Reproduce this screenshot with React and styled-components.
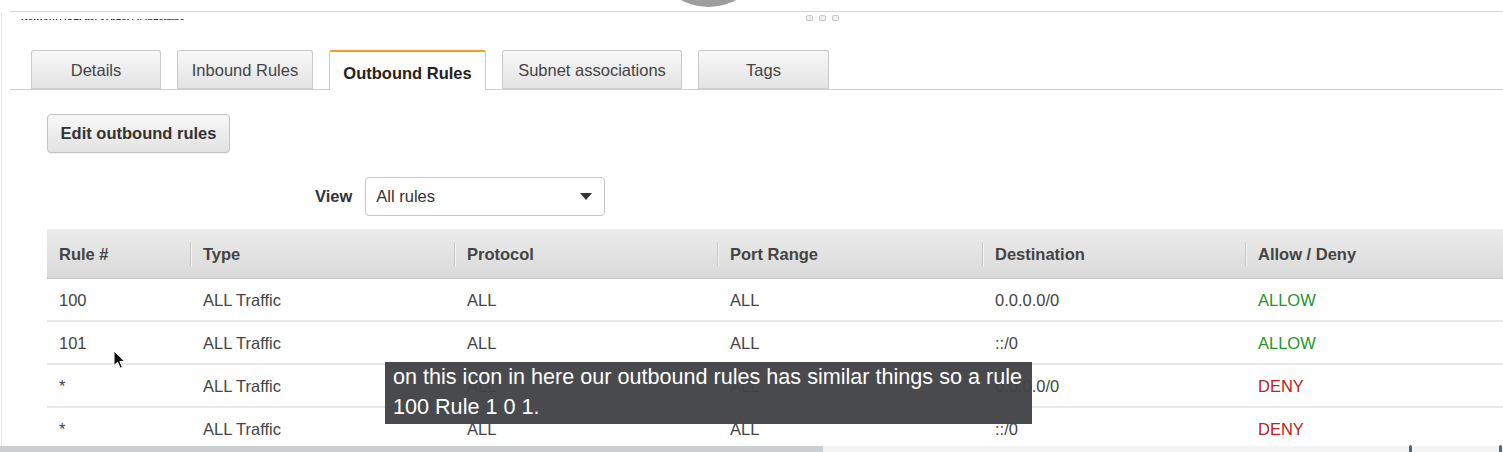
import React from "react";
import styled, { createGlobalStyle } from "styled-components";

const GlobalStyle = createGlobalStyle`
  html, body { margin: 0; padding: 0; background: #ffffff; }
  body { font-family: "Liberation Sans", Arial, sans-serif; overflow: hidden; }
`;

const Page = styled.div`
  position: relative;
  width: 1503px;
  height: 452px;
  overflow: hidden;
  background: #fff;
  color: #444;
`;

const Circle = styled.div`
  position: absolute;
  left: 651px;
  top: -108px;
  width: 115px;
  height: 115px;
  border-radius: 50%;
  background: #9d9d9d;
`;

const Frame = styled.div`
  padding-top: 11px;
`;

const TopRule = styled.div`
  margin-left: 10px;
  height: 1px;
  background: #d2d2d2;
`;

const Body = styled.div`
  margin-left: 1px;
  border-left: 1px solid #e6e6e6;
  height: 440px;
`;

const TitleRow = styled.div`
  display: flex;
  align-items: flex-start;
  height: 12px;
`;

const TitleClip = styled.div`
  width: 804px;
  height: 4px;
  margin-top: 7px;
  overflow: hidden;
  padding-left: 19px;
  box-sizing: border-box;
`;

const TitleText = styled.div`
  margin-top: -8px;
  font-size: 9.6px;
  letter-spacing: -0.2px;
  font-weight: bold;
  color: #2e2e2e;
  line-height: 12px;
  filter: blur(0.4px);
  white-space: nowrap;
`;

const Dots = styled.div`
  display: flex;
  gap: 6px;
  margin-top: 3px;
`;

const Dot = styled.span`
  width: 5px;
  height: 4px;
  border: 1px solid #c9c9c9;
  border-radius: 2px 2px 1px 1px;
  background: #eee;
`;

const TabBar = styled.div`
  display: flex;
  align-items: flex-end;
  gap: 16px;
  margin-top: 26px;
  margin-left: 8px;
  padding-left: 21px;
  border-bottom: 1px solid #cfcfcf;
  height: 39px;
`;

const Tab = styled.div`
  box-sizing: border-box;
  width: ${(p) => p.$w}px;
  height: ${(p) => (p.$active ? 40 : 39)}px;
  margin-bottom: ${(p) => (p.$active ? -1 : 0)}px;
  display: flex;
  align-items: center;
  justify-content: center;
  font-size: 16.5px;
  font-weight: ${(p) => (p.$active ? "bold" : "normal")};
  color: ${(p) => (p.$active ? "#222" : "#444")};
  padding-top: ${(p) => (p.$active ? 4 : 1)}px;
  border: 1px solid #cacaca;
  border-bottom: ${(p) => (p.$active ? "none" : "1px solid #cfcfcf")};
  border-top: ${(p) => (p.$active ? "2px solid #f39a2d" : "1px solid #cacaca")};
  border-radius: 3px 3px 0 0;
  background: ${(p) =>
    p.$active ? "#fff" : "linear-gradient(#f7f7f7, #e4e4e4)"};
`;

const Content = styled.div`
  padding-left: 45px;
  padding-top: 24px;
`;

const Button = styled.button`
  box-sizing: border-box;
  width: 183px;
  height: 39px;
  border: 1px solid #c3c3c3;
  border-radius: 4px;
  background: linear-gradient(#f8f8f8, #e2e2e2);
  font-family: "Liberation Sans", Arial, sans-serif;
  font-size: 16.5px;
  font-weight: bold;
  color: #333;
  padding: 0;
  box-shadow: 0 1px 1px rgba(0, 0, 0, 0.06);
`;

const ViewRow = styled.div`
  display: flex;
  align-items: center;
  gap: 13px;
  margin-top: 24px;
  padding-left: 268px;
`;

const ViewLabel = styled.span`
  font-size: 16.5px;
  font-weight: bold;
  color: #333;
`;

const Select = styled.div`
  box-sizing: border-box;
  width: 240px;
  height: 39px;
  border: 1px solid #c6c6c6;
  border-radius: 4px;
  background: #fff;
  display: flex;
  align-items: center;
  justify-content: space-between;
  padding: 0 12px 0 10px;
  font-size: 16.5px;
  color: #333;
`;

const Caret = styled.span`
  width: 0;
  height: 0;
  border-left: 6px solid transparent;
  border-right: 6px solid transparent;
  border-top: 7px solid #333;
`;

const Table = styled.div`
  margin-top: 13px;
  width: 1461px;
`;

const cols = "143px 264px 263px 265px 263px 263px";

const HeadRow = styled.div`
  display: grid;
  grid-template-columns: ${cols};
  height: 50px;
  box-sizing: border-box;
  background: linear-gradient(#ececec, #d9d9d9);
  border-bottom: 1px solid #c4c4c4;
`;

const HeadCell = styled.div`
  position: relative;
  display: flex;
  align-items: center;
  padding-left: ${(p) => (p.$first ? 12 : 13)}px;
  padding-top: 2px;
  font-size: 16.5px;
  font-weight: bold;
  color: #444;
  &::before {
    content: "";
    display: ${(p) => (p.$first ? "none" : "block")};
    position: absolute;
    left: 0;
    top: 13px;
    height: 24px;
    width: 1px;
    background: #c9c9c9;
    box-shadow: 1px 0 0 #f2f2f2;
  }
`;

const Row = styled.div`
  display: grid;
  grid-template-columns: ${cols};
  height: 43px;
  box-sizing: border-box;
  border-bottom: 2px solid #e8e8e8;
`;

const Cell = styled.div`
  display: flex;
  align-items: center;
  padding-left: ${(p) => (p.$first ? 12 : 13)}px;
  padding-top: 2px;
  font-size: 16.5px;
  color: ${(p) =>
    p.$tone === "allow" ? "#23952a" : p.$tone === "deny" ? "#c0201c" : "#444"};
`;

const Caption = styled.div`
  position: absolute;
  left: 385px;
  top: 362px;
  width: 647px;
  height: 62px;
  box-sizing: border-box;
  padding: 0 8px;
  background: rgba(66, 67, 71, 0.96);
  color: #fff;
  font-size: 21.6px;
  line-height: 30px;
  white-space: nowrap;
`;

const Cursor = styled.svg`
  position: absolute;
  left: 113px;
  top: 350px;
`;

const ScrollTrack = styled.div`
  position: absolute;
  left: 0;
  bottom: 0;
  width: 1503px;
  height: 6px;
  background: #f3f3f3;
`;

const ScrollThumb = styled.div`
  width: 823px;
  height: 6px;
  background: #cbcfd2;
`;

const Marker = styled.span`
  position: absolute;
  bottom: 0;
  left: ${(p) => p.$x}px;
  width: 3px;
  height: 7px;
  border-radius: 2px 2px 0 0;
  background: #5c6272;
`;

const rows = [
  { n: "100", dest: "0.0.0.0/0", act: "ALLOW" },
  { n: "101", dest: "::/0", act: "ALLOW" },
  { n: "*", dest: "0.0.0.0/0", act: "DENY" },
  { n: "*", dest: "::/0", act: "DENY" },
];

const tabs = [
  { label: "Details", w: 130 },
  { label: "Inbound Rules", w: 136 },
  { label: "Outbound Rules", w: 157, active: true },
  { label: "Subnet associations", w: 180 },
  { label: "Tags", w: 131 },
];

const heads = ["Rule #", "Type", "Protocol", "Port Range", "Destination", "Allow / Deny"];

export default function App() {
  return (
    <Page>
      <GlobalStyle />
      <Circle />
      <Frame>
        <TopRule />
        <Body>
          <TitleRow>
            <TitleClip>
              <TitleText>Network ACL: acl-07b1e7f4f4b2eaabc</TitleText>
            </TitleClip>
            <Dots>
              <Dot />
              <Dot />
              <Dot />
            </Dots>
          </TitleRow>
          <TabBar>
            {tabs.map((t) => (
              <Tab key={t.label} $w={t.w} $active={t.active}>
                {t.label}
              </Tab>
            ))}
          </TabBar>
          <Content>
            <Button>Edit outbound rules</Button>
            <ViewRow>
              <ViewLabel>View</ViewLabel>
              <Select>
                <span>All rules</span>
                <Caret />
              </Select>
            </ViewRow>
            <Table>
              <HeadRow>
                {heads.map((h, i) => (
                  <HeadCell key={h} $first={i === 0}>
                    {h}
                  </HeadCell>
                ))}
              </HeadRow>
              {rows.map((r, i) => (
                <Row key={i}>
                  <Cell $first>{r.n}</Cell>
                  <Cell>ALL Traffic</Cell>
                  <Cell>ALL</Cell>
                  <Cell>ALL</Cell>
                  <Cell>{r.dest}</Cell>
                  <Cell $tone={r.act === "ALLOW" ? "allow" : "deny"}>{r.act}</Cell>
                </Row>
              ))}
            </Table>
          </Content>
        </Body>
      </Frame>
      <Caption>
        on this icon in here our outbound rules has similar things so a rule
        <br />
        100 Rule 1 0 1.
      </Caption>
      <Cursor width="13" height="20" viewBox="0 0 13 20">
        <path
          d="M1 1 L1 15.5 L4.6 12.3 L7.2 18.2 L9.4 17.2 L6.9 11.5 L11.6 11.3 Z"
          fill="#111"
          stroke="#fff"
          strokeWidth="1"
          strokeLinejoin="round"
        />
      </Cursor>
      <ScrollTrack>
        <ScrollThumb />
      </ScrollTrack>
      <Marker $x={1409} />
      <Marker $x={1499} />
    </Page>
  );
}
